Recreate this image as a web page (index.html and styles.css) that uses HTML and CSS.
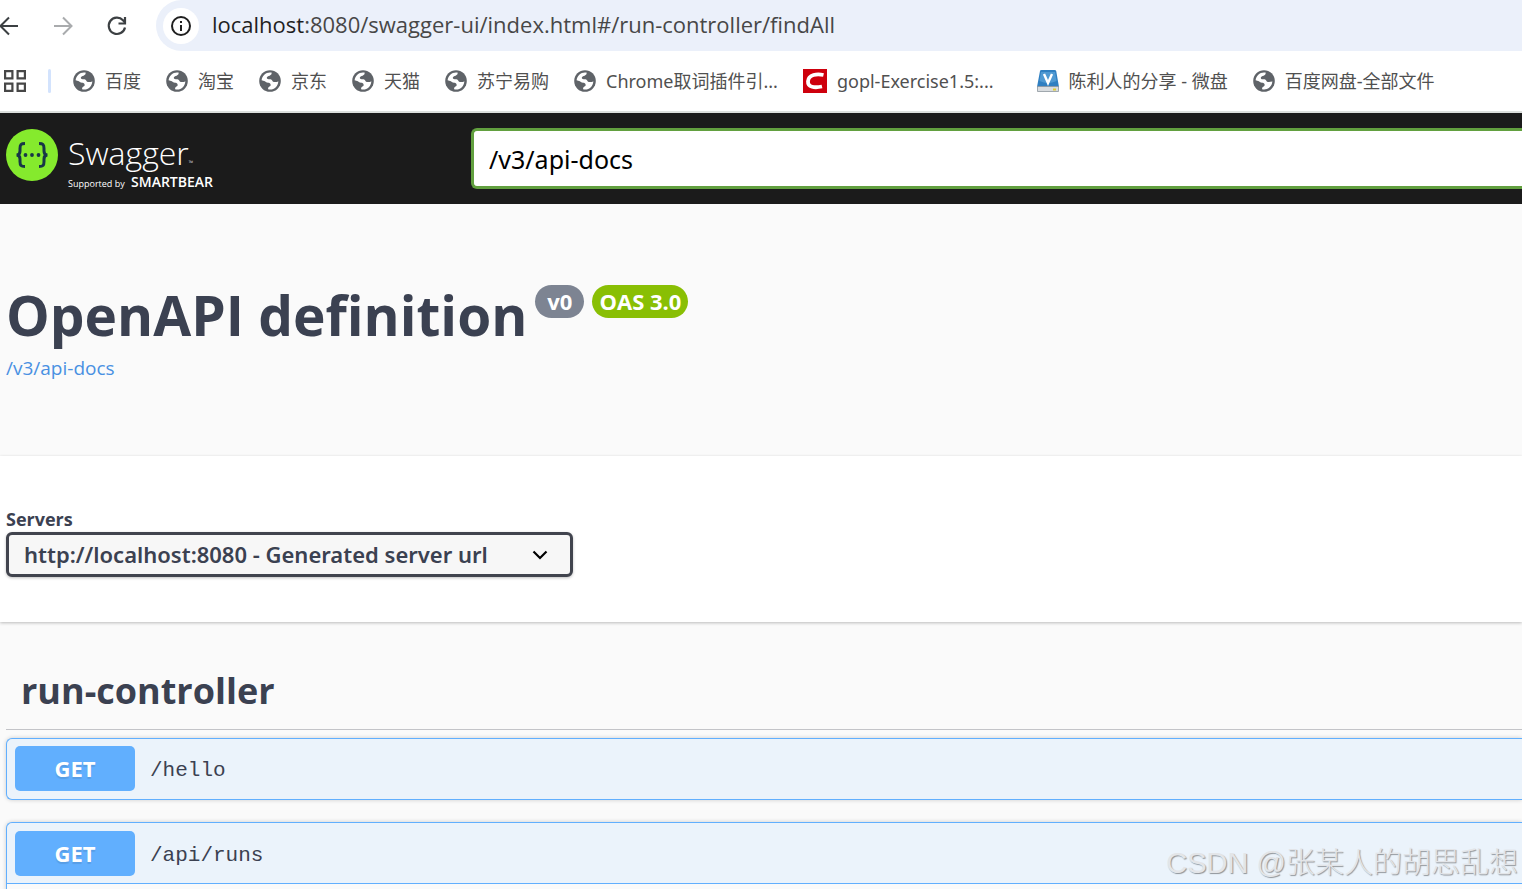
FILE: index.html
```html
<!DOCTYPE html>
<html lang="zh-CN">
<head>
<meta charset="utf-8">
<title>Swagger UI</title>
<meta name="viewport" content="width=device-width, initial-scale=1">
<link rel="stylesheet" href="styles.css">
</head>
<body>
<svg class="sprite" aria-hidden="true">
  <symbol id="globe" viewBox="0 0 22 22">
    <circle cx="11" cy="11" r="10.8" fill="#5f6368"/>
    <path fill="#fff" d="M12.6 2.6C12.9 4 12.1 5.2 10.6 5.7 9.2 6.1 8 6.6 7.8 7.8 7.7 8.8 8.6 9.3 10 9.2c1.700-.1 2.700.3 3.200 1.400.4 1 1.300 1.500 2.600 1.500 1.500 0 2.500-.3 3.500-.9C19.200 16 15.600 19.500 11.200 19.500c-.8 0-1.500-.1-2.100-.3 0-1.200.1-2 1-2.400 1.200-.4 1.700-1 1.500-2.200-.2-1.300-1.100-1.900-2.700-1.900-1.200 0-2.200-.6-3-1.400L2.600 10.300C3 5.900 6.600 2.400 11 2.400c.6 0 1.100.1 1.600.2z"/>
  </symbol>
</svg>

<header class="browser">
  <div class="toolbar">
    <button class="tool" type="button" aria-label="Back">
      <svg width="24" height="24" viewBox="0 0 24 24" fill="none" stroke="#3c4043" stroke-width="2"><path d="M21 12H4M12 3.500 3.500 12l8.500 8.500"/></svg>
    </button>
    <button class="tool" type="button" aria-label="Forward" disabled>
      <svg width="24" height="24" viewBox="0 0 24 24" fill="none" stroke="#a9abad" stroke-width="2"><path d="M3 12h17M12 3.500l8.500 8.500-8.500 8.500"/></svg>
    </button>
    <button class="tool" type="button" aria-label="Reload">
      <svg width="24" height="24" viewBox="0 0 24 24" fill="none" stroke="#3c4043" stroke-width="2.200"><path d="M20 13.500A8.200 8.200 0 1 1 18 6.200l2 2.300"/><path d="M20 3v6.500h-6.500"/></svg>
    </button>
    <div class="address">
      <button class="site-info" type="button" aria-label="Site information">
        <svg width="22" height="22" viewBox="0 0 22 22"><circle cx="11" cy="11" r="9" fill="none" stroke="#1f1f1f" stroke-width="2"/><path d="M10 10h2v6h-2zM10 6h2v2h-2z" fill="#1f1f1f"/></svg>
      </button>
      <div class="url"><span class="host">localhost</span>:8080/swagger-ui/index.html#/run-controller/findAll</div>
    </div>
  </div>
  <nav class="bookmarks" aria-label="Bookmarks">
    <button class="apps" type="button" aria-label="Apps">
      <svg width="22" height="22" viewBox="0 0 22 22" fill="none" stroke="#474747" stroke-width="2.200"><path d="M1.100 1.100h7.300v7.300H1.100zM13.600 1.100h7.300v7.300h-7.300zM1.100 13.600h7.300v7.300H1.100zM13.600 13.600h7.300v7.300h-7.300z"/></svg>
    </button>
    <span class="divider"></span>
    <div class="links">
      <a href="#"><svg class="fav"><use href="#globe"/></svg>百度</a>
      <a href="#"><svg class="fav"><use href="#globe"/></svg>淘宝</a>
      <a href="#"><svg class="fav"><use href="#globe"/></svg>京东</a>
      <a href="#"><svg class="fav"><use href="#globe"/></svg>天猫</a>
      <a href="#"><svg class="fav"><use href="#globe"/></svg>苏宁易购</a>
      <a href="#"><svg class="fav"><use href="#globe"/></svg>Chrome取词插件引...</a>
      <a class="wide" href="#"><svg class="fav-large" viewBox="0 0 24 24"><path fill="#ce000d" d="M0 0h24v24H0z"/><path fill="none" stroke="#fff" stroke-width="3.800" d="M20.500 6C14 4.500 5.500 5.500 5 12.300c-.3 6 6.500 6.800 14 5.200"/></svg>gopl-Exercise1.5:...</a>
      <a href="#"><svg class="fav" viewBox="0 0 22 22"><path fill="#2f7fc1" d="M3 1Q3 0 4.500 0h13Q19 0 19.200 1L22 17H0z"/><path fill="#69aee0" d="M4 2h14l1.500 9Q11 15 2.500 11z" opacity=".55"/><path fill="#d8dcdf" stroke="#8d969d" stroke-width=".8" d="M.5 16.500h21V21.500H.5z"/><path fill="#e0cd32" d="M16 18.500h3v2h-3z"/><path fill="none" stroke="#fff" stroke-width="2.400" d="M7 4l4 9 4-9"/></svg>陈利人的分享 - 微盘</a>
      <a href="#"><svg class="fav"><use href="#globe"/></svg>百度网盘-全部文件</a>
    </div>
  </nav>
</header>

<div class="topbar">
  <a class="brand" href="#" aria-label="Swagger">
    <svg class="brand-mark" viewBox="0 0 52 52"><circle cx="26" cy="26" r="26" fill="#85ea2d"/><g fill="none" stroke="#173647" stroke-width="3"><path d="M19 14.500c-4 0-5 1-5 5v2.500c0 2.500-1 4-3.500 4 2.500 0 3.500 1.500 3.500 4v2.500c0 4 1 5 5 5M33 14.500c4 0 5 1 5 5v2.500c0 2.500 1 4 3.500 4-2.500 0-3.500 1.500-3.500 4v2.500c0 4-1 5-5 5"/></g><g fill="#173647"><circle cx="19.500" cy="26" r="1.900"/><circle cx="26" cy="26" r="1.900"/><circle cx="32.500" cy="26" r="1.900"/></g></svg>
    <span class="brand-text">
      <span class="brand-name">Swagger<span class="tm">™</span></span>
      <span class="brand-by">Supported by <b>SMARTBEAR</b></span>
    </span>
  </a>
  <input class="spec-url" type="text" value="/v3/api-docs" aria-label="API definition URL">
</div>

<main>
  <section class="info">
    <div class="title-row">
      <h1>OpenAPI definition</h1>
      <span class="badge version">v0</span>
      <span class="badge oas">OAS 3.0</span>
    </div>
    <a class="spec-link" href="#">/v3/api-docs</a>
  </section>

  <section class="servers">
    <label for="server">Servers</label>
    <div class="select-wrap">
      <select id="server"><option>http://localhost:8080 - Generated server url</option></select>
      <svg class="chevron" width="16" height="10" viewBox="0 0 16 10" fill="none" stroke="#000" stroke-width="2.200"><path d="M1.500 1.500 8 8l6.500-6.500"/></svg>
    </div>
  </section>

  <section class="operations">
    <h2>run-controller</h2>
    <div class="operation">
      <button class="summary" type="button"><span class="method">GET</span><span class="path">/hello</span></button>
    </div>
    <div class="operation open">
      <button class="summary" type="button"><span class="method">GET</span><span class="path">/api/runs</span></button>
      <div class="details"></div>
    </div>
  </section>
</main>
<div class="watermark">CSDN @张某人的胡思乱想</div>
</body>
</html>
```
FILE: styles.css
```css
* { box-sizing: border-box; }

html { height: 100%; overflow: hidden; }

body {
  display: flex;
  flex-direction: column;
  height: 100%;
  margin: 0;
  overflow: hidden;
  position: relative;
  background: #fafafa;
  color: #3b4151;
  font-family: "Open Sans", "Noto Sans CJK SC", sans-serif;
}

button { padding: 0; border: 0; background: none; font: inherit; color: inherit; }
a { text-decoration: none; }
svg { display: block; flex: none; }
.sprite { position: absolute; width: 0; height: 0; }

.browser { flex: none; background: #fff; border-bottom: 2px solid #dcdfdd; }
.toolbar { display: flex; height: 51px; }
.tool { width: 54px; display: flex; align-items: center; }
.tool:first-child { width: 50px; margin-left: -3px; justify-content: flex-start; }
.tool:nth-child(2) { width: 58px; padding-left: 4px; }
.tool:nth-child(3) { width: 51px; }
.address {
  flex: 1;
  display: flex;
  align-items: center;
  gap: 13px;
  padding-left: 7px;
  border-radius: 26px 0 0 26px;
  background: #ebf0fa;
}
.site-info {
  width: 36px;
  height: 36px;
  display: grid;
  place-items: center;
  border-radius: 50%;
  background: #fff;
}
.url { padding-bottom: 3px; font-size: 22px; line-height: 30px; color: #474747; white-space: nowrap; }
.host { color: #1f1f1f; }

.bookmarks { display: flex; align-items: center; height: 60px; padding-left: 4px; }
.divider { width: 3px; height: 24px; margin: 0 22px; border-radius: 2px; background: #d3e3fd; }
.links { display: flex; gap: 25px; }
.links a {
  display: flex;
  align-items: center;
  gap: 10px;
  color: #505050;
  font-family: "Noto Sans", "Noto Sans CJK SC", sans-serif;
  font-size: 18px;
  line-height: 26px;
  white-space: nowrap;
}
.links .wide { padding-right: 18px; }
.fav { width: 22px; height: 22px; }
.fav-large { width: 24px; height: 24px; }

.topbar { flex: none; display: flex; align-items: center; height: 91px; background: #1b1b1b; }
.brand {
  width: 471px;
  flex: none;
  align-self: flex-start;
  display: flex;
  gap: 10px;
  padding: 16px 0 0 6px;
  color: #fff;
}
.brand-mark { width: 52px; height: 52px; }
.brand-text { display: flex; flex-direction: column; padding-top: 4px; }
.brand-name { font-size: 32px; font-weight: 300; line-height: 40px; }
.tm { font-size: 6px; line-height: 1; }
.brand-by { font-size: 9px; line-height: 18px; white-space: nowrap; }
.brand-by b { margin-left: 4px; font-size: 14px; font-weight: 600; }
.spec-url {
  flex: 1;
  min-width: 0;
  height: 61px;
  padding: 0 15px;
  border: 3px solid #62a03f;
  border-right: 0;
  border-radius: 6px 0 0 6px;
  background: #fff;
  color: #000;
  font: 25px/34px "Noto Sans", sans-serif;
}

main { flex: 1; min-height: 0; overflow: hidden; }
.info { padding: 75px 6px 70px; }
.title-row { display: flex; align-items: flex-start; gap: 8px; }
h1 { margin: 0; font-size: 55px; line-height: 72px; white-space: nowrap; }
.badge {
  height: 33px;
  margin-top: 6px;
  border-radius: 17px;
  color: #fff;
  font-size: 22px;
  font-weight: 700;
  line-height: 33px;
  white-space: nowrap;
}
.version { padding: 0 12px; background: #7d8492; }
.oas { padding: 0 7px; background: #89bf04; }
.spec-link { display: inline-block; color: #4990e2; font-size: 19px; line-height: 35px; }

.servers {
  padding: 50px 6px 45px;
  background: #fff;
  box-shadow: 0 1px 3px rgba(0, 0, 0, .25);
}
.servers label { display: block; font-size: 18px; font-weight: 700; line-height: 26px; }
.select-wrap { display: grid; width: 567px; max-width: 100%; align-items: center; }
.select-wrap > * { grid-area: 1 / 1; }
select {
  height: 45px;
  padding: 0 48px 1px 15px;
  border: 3px solid #41444e;
  border-radius: 6px;
  appearance: none;
  background: #f7f7f7;
  box-shadow: 0 1px 3px rgba(0, 0, 0, .25);
  color: #3b4151;
  font: 600 22px/30px "Noto Sans", sans-serif;
}
.chevron { justify-self: end; margin-right: 25px; pointer-events: none; }

.operations { padding: 32px 0 0 6px; }
h2 {
  margin: 0 0 8px;
  padding: 10px 15px 11px;
  border-bottom: 1px solid #c3c4c8;
  font-size: 36px;
  font-weight: 700;
  line-height: 54px;
}
.operation {
  margin-bottom: 22px;
  border: 1px solid #61affe;
  border-right: 0;
  border-radius: 6px 0 0 6px;
  background: #ebf3fb;
  box-shadow: 0 0 4px rgba(0, 0, 0, .19);
}
.summary { width: 100%; display: flex; align-items: center; gap: 15px; padding: 7px 8px 8px; }
.method {
  width: 120px;
  border-radius: 5px;
  background: #61affe;
  color: #fff;
  font-size: 22px;
  font-weight: 700;
  line-height: 45px;
  text-align: center;
  text-shadow: 0 2px 1px rgba(0, 0, 0, .1);
}
.path { padding-top: 4px; font: 21px/30px "Liberation Mono", monospace; }
.open .summary { padding: 8px 8px 7px; border-bottom: 1px solid #61affe; }
.details { height: 40px; background: #fafafa; }

.watermark {
  position: absolute;
  right: 4px;
  bottom: 4px;
  color: #e3e5e8;
  font: 300 29px/44px "Liberation Sans", "Noto Sans CJK SC", sans-serif;
  text-shadow: 1px 1px 1px #8f9499;
  white-space: nowrap;
  pointer-events: none;
}
```
